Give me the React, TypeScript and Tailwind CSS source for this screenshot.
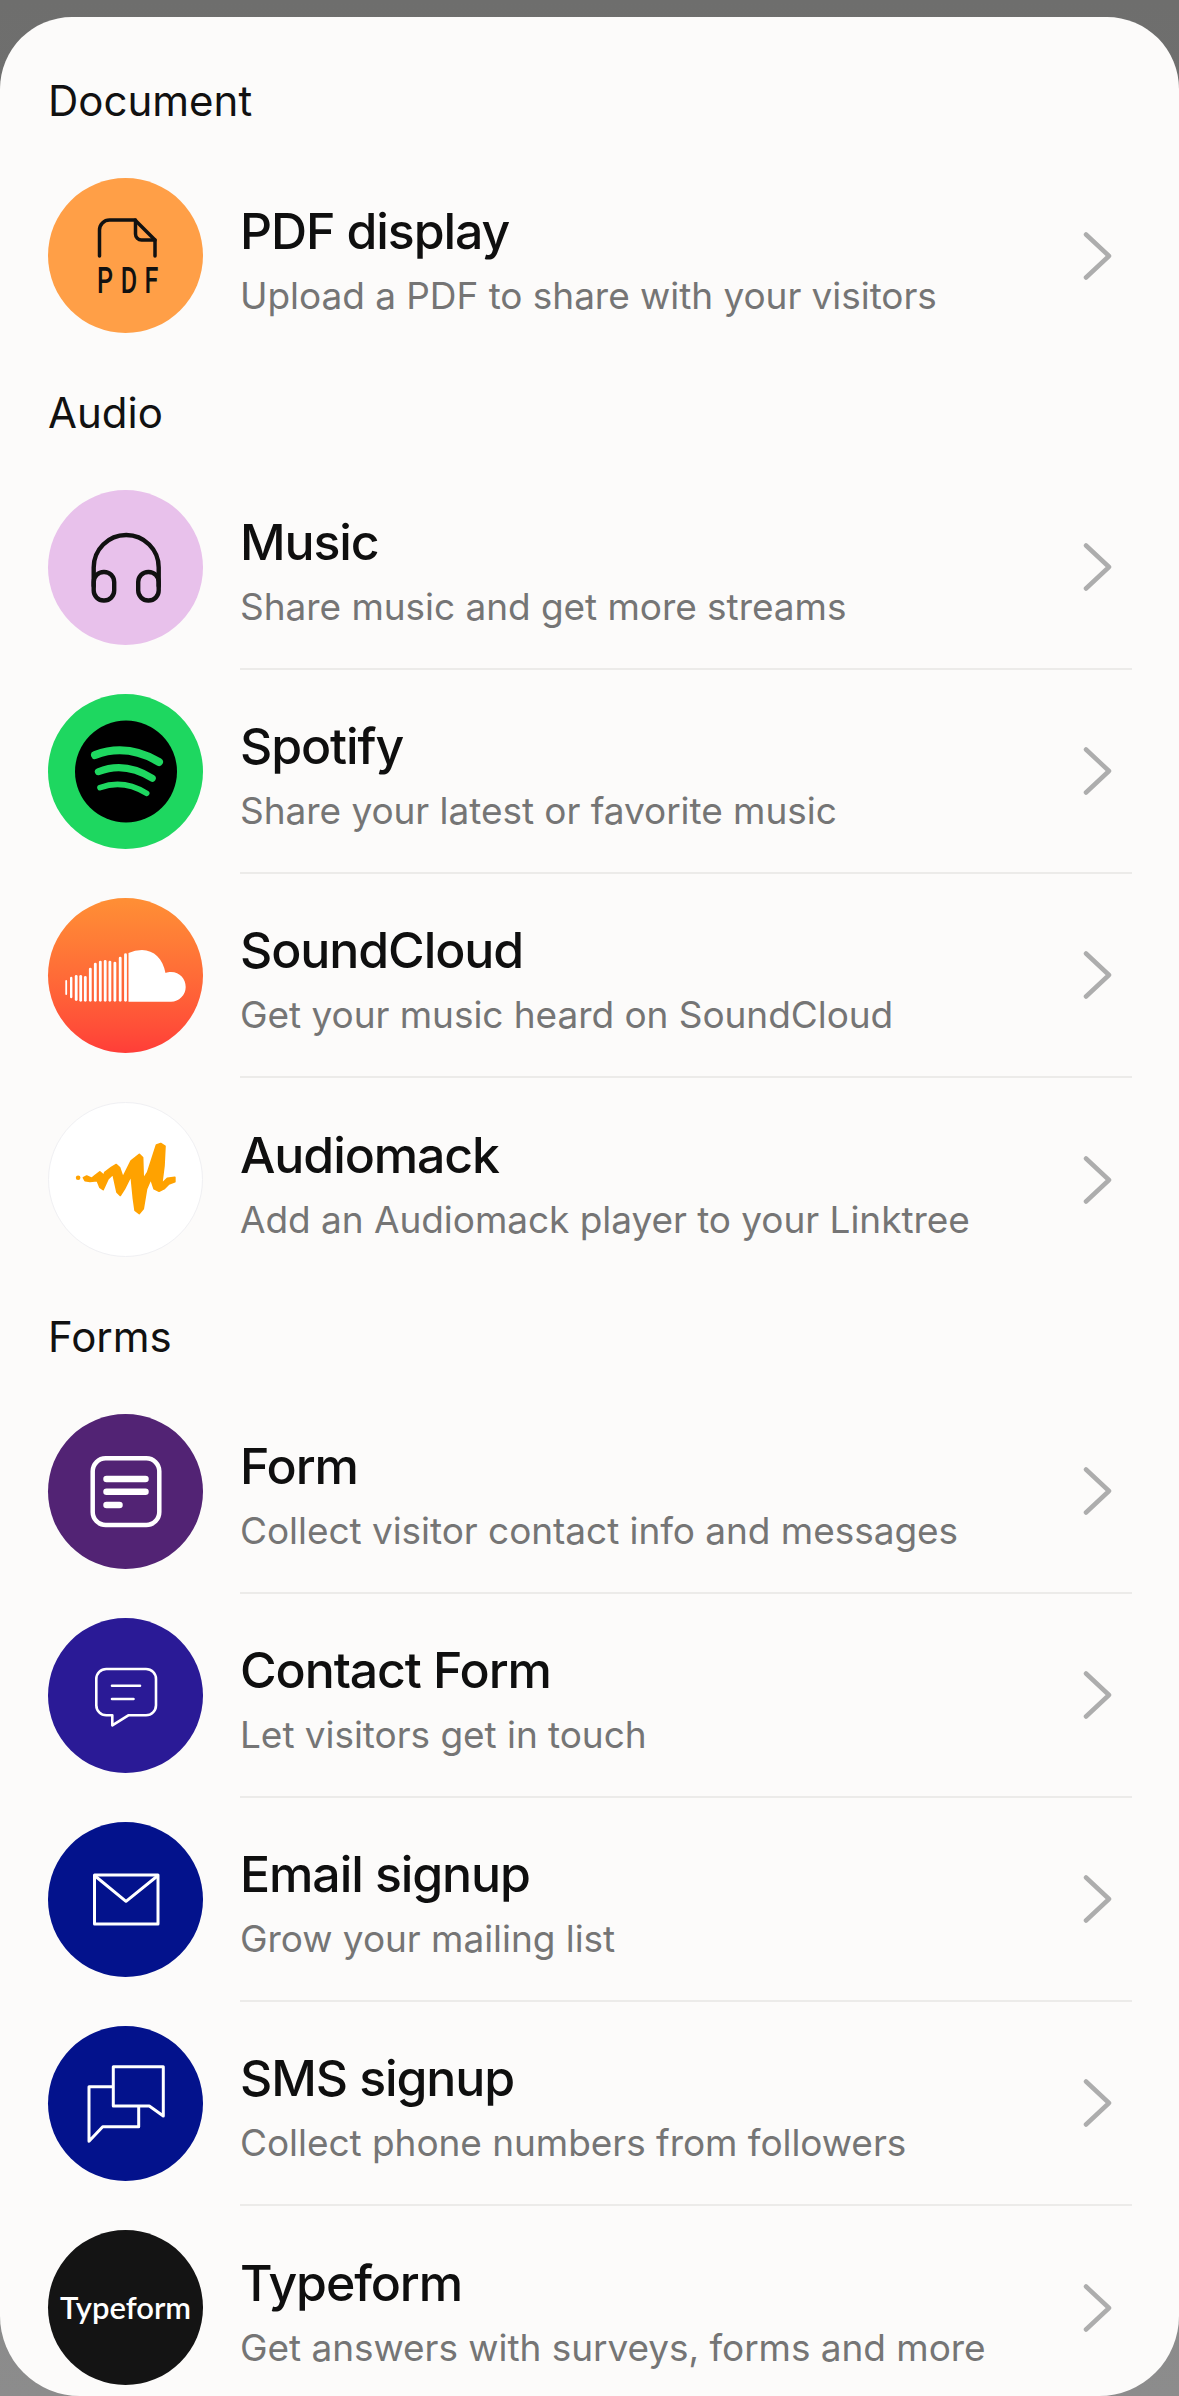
import type { ReactNode } from 'react';

function PdfIcon() {
  return (
    <svg viewBox="0 0 155 155" className="w-full h-full" fill="none" stroke="#111" strokeWidth="3.5" strokeLinecap="round" strokeLinejoin="round">
      <path d="M51.5 78V52a10 10 0 0 1 10-10H87L107 62V78" />
      <path d="M87.5 42V56a6 6 0 0 0 6 6H107" />
      <text transform="translate(49 115) scale(0.68 1)" x="0 35 70" fill="#111" stroke="none" fontSize="37" fontWeight="500" fontFamily="Roboto, sans-serif">PDF</text>
    </svg>
  );
}

function MusicIcon() {
  return (
    <svg viewBox="0 0 155 155" className="w-full h-full" fill="none" stroke="#111" strokeWidth="4.4" strokeLinecap="round">
      <path d="M45.7 96V77.5a32.5 32.5 0 0 1 65 0V96" />
      <rect x="45.7" y="82" width="20.5" height="28.5" rx="10" />
      <rect x="90.2" y="82" width="20.5" height="28.5" rx="10" />
    </svg>
  );
}

function SpotifyIcon() {
  return (
    <svg viewBox="0 0 155 155" className="w-full h-full" fill="none" stroke="#1ed760" strokeLinecap="round">
      <circle cx="78" cy="77.5" r="51" fill="#000" stroke="none" />
      <path d="M47 61Q79 49 111 68" strokeWidth="8" />
      <path d="M50.3 77.7Q77 67 104.3 84.3" strokeWidth="7" />
      <path d="M52 93.7Q75 85 98.7 99.3" strokeWidth="5.6" />
    </svg>
  );
}

// x, top, bottom, width of each bar in the soundcloud logo
const cloudBars = [
  [18.2, 82, 97, 1.8],
  [23.2, 78.7, 100.3, 2.4],
  [28.2, 77, 103, 2.8],
  [32.7, 77, 103.7, 2.8],
  [37.3, 78, 103.7, 2.8],
  [42.3, 69.7, 103.7, 2.8],
  [47.3, 64.7, 103.7, 2.8],
  [52.3, 62.7, 103.7, 2.8],
  [57.2, 62, 103.7, 2.8],
  [61.9, 62.7, 103.7, 2.8],
  [66.9, 63.7, 103.7, 2.8],
  [72.2, 58.7, 103.7, 2.8],
  [77.5, 55.3, 103.7, 2.8],
];

function SoundCloudIcon() {
  return (
    <svg viewBox="0 0 155 155" className="w-full h-full" fill="#fff">
      {cloudBars.map(([x, top, bottom, w]) => (
        <rect key={x} x={x - w / 2} y={top} width={w} height={bottom - top} rx={w / 2} />
      ))}
      <path d="M80.5 103.7V55Q87 52 94 52C106 52 115 61 117.5 75C119.5 74.3 121 74 123 74C132 74 137.7 81 137.7 89C137.7 97 131 103.7 123 103.7Z" />
    </svg>
  );
}

function AudiomackIcon() {
  return (
    <svg viewBox="-64.5 -81 465 465" className="w-full h-full" fill="#ffa200">
      <circle cx="24" cy="146" r="7" />
      <polygon
        stroke="#ffa200"
        strokeWidth="5"
        strokeLinejoin="round"
        points="40,146 50,141 65,148 75,140 90,128 98,135 100,145 105,130 125,115 140,106 150,115 160,145 185,95 210,75 220,85 222,150 235,130 262,47 275,42 288,50 285,110 278,165 295,148 318,145 318,158 300,165 285,180 270,187 255,180 245,150 232,180 222,240 210,255 197,245 192,210 185,140 165,180 152,200 142,190 130,135 115,150 100,182 90,175 82,155 60,157 45,155"
      />
    </svg>
  );
}

function FormIcon() {
  return (
    <svg viewBox="0 0 155 155" className="w-full h-full" fill="none" stroke="#fff" strokeLinecap="round">
      <rect x="44.7" y="44.3" width="66.6" height="66.7" rx="13" strokeWidth="4.5" />
      <path d="M58.5 65H97.5M58.5 77.7H97.5M58.5 91H71.5" strokeWidth="6.5" />
    </svg>
  );
}

function ContactIcon() {
  return (
    <svg viewBox="0 0 155 155" className="w-full h-full" fill="none" stroke="#fff" strokeWidth="2.6" strokeLinecap="round" strokeLinejoin="round">
      <path d="M58.3 51H98a10 10 0 0 1 10 10V87.3a10 10 0 0 1-10 10H80.3L64.3 107.3V97.3H58.3a10 10 0 0 1-10-10V61a10 10 0 0 1 10-10Z" />
      <path d="M64 67.7H92M64 81H85.5" />
    </svg>
  );
}

function EmailIcon() {
  return (
    <svg viewBox="0 0 155 155" className="w-full h-full" fill="none" stroke="#fff" strokeWidth="3" strokeLinejoin="round">
      <rect x="46.5" y="53" width="63.5" height="49" />
      <path d="M46.5 53.5L78 79.3L110 53.5" />
    </svg>
  );
}

function SmsIcon() {
  return (
    <svg viewBox="0 0 155 155" className="w-full h-full" fill="none" stroke="#fff" strokeWidth="3" strokeLinecap="round" strokeLinejoin="round">
      <path d="M65.3 40.7H115.3V90L101.3 80H65.3Z" />
      <path d="M64.3 60.7H41V115.3L54.7 100.7H90.7V81" />
    </svg>
  );
}

function Chevron() {
  return (
    <svg viewBox="0 0 32 52" className="w-8 h-[52px] shrink-0" fill="none" stroke="#adadad" strokeWidth="4.5" strokeLinecap="round" strokeLinejoin="round">
      <path d="M6 4.5L29 26L6 47.5" />
    </svg>
  );
}

function Row({ icon, bg, title, sub, last }: { icon: ReactNode; bg: string; title: string; sub: string; last?: boolean }) {
  return (
    <div className="flex h-[204px] pl-12 pr-[47px]">
      <div className="self-center shrink-0 mr-[37px]">
        <div className={`w-[155px] h-[155px] rounded-full overflow-hidden flex items-center justify-center ${bg}`}>{icon}</div>
      </div>
      <div className={`flex-1 min-w-0 flex items-center justify-between pr-5 -mb-px ${last ? '' : 'border-b-2 border-[#ecebe9]'}`}>
        <div className="pt-2">
          <div className="text-[50px] leading-[62px] font-[550] tracking-[-1.1px] text-[#0f0f0f]">{title}</div>
          <div className="text-[37px] leading-[46px] mt-[11px] text-[#757575] tracking-[-0.05px]">{sub}</div>
        </div>
        <Chevron />
      </div>
    </div>
  );
}

function Heading({ children }: { children: ReactNode }) {
  return <div className="h-[108px] pl-12 pt-[3px] flex items-center text-[42px] text-[#111]">{children}</div>;
}

export default function App() {
  return (
    <div className="w-[1179px] h-[2396px] overflow-hidden bg-gradient-to-b from-[#6e6e6d] to-[#8c8c8c] pt-[17px] font-['Inter',sans-serif]">
      <div className="h-[2379px] rounded-t-[72px] rounded-b-[80px] overflow-hidden bg-[#fcfbfa] pt-7">
        <Heading>Document</Heading>
        <Row last icon={<PdfIcon />} bg="bg-[#ff9f47]" title="PDF display" sub="Upload a PDF to share with your visitors" />
        <Heading>Audio</Heading>
        <Row icon={<MusicIcon />} bg="bg-[#e8c1eb]" title="Music" sub="Share music and get more streams" />
        <Row icon={<SpotifyIcon />} bg="bg-[#1ed760]" title="Spotify" sub="Share your latest or favorite music" />
        <Row icon={<SoundCloudIcon />} bg="bg-gradient-to-b from-[#ff8f35] to-[#ff3d38]" title="SoundCloud" sub="Get your music heard on SoundCloud" />
        <Row last icon={<AudiomackIcon />} bg="bg-white border border-[#f0f0f3]" title="Audiomack" sub="Add an Audiomack player to your Linktree" />
        <Heading>Forms</Heading>
        <Row icon={<FormIcon />} bg="bg-[#522374]" title="Form" sub="Collect visitor contact info and messages" />
        <Row icon={<ContactIcon />} bg="bg-[#2a1a96]" title="Contact Form" sub="Let visitors get in touch" />
        <Row icon={<EmailIcon />} bg="bg-[#03128c]" title="Email signup" sub="Grow your mailing list" />
        <Row icon={<SmsIcon />} bg="bg-[#03128c]" title="SMS signup" sub="Collect phone numbers from followers" />
        <Row
          last
          icon={<span className="text-white text-[31px] font-semibold font-['Lato',sans-serif]">Typeform</span>}
          bg="bg-[#141414]"
          title="Typeform"
          sub="Get answers with surveys, forms and more"
        />
      </div>
    </div>
  );
}
